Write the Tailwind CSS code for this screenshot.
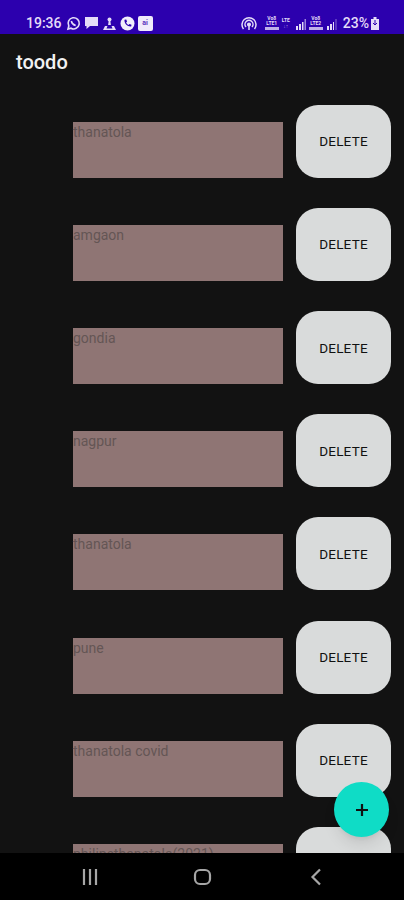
<!DOCTYPE html>
<html lang="en">
<head>
    <meta charset="UTF-8">
    <meta name="viewport" content="width=device-width, initial-scale=1.0">
    <title>toodo</title>
    <script src="https://cdn.jsdelivr.net/npm/@tailwindcss/browser@4"></script>
</head>
<body class="w-[404px] h-[900px] overflow-hidden bg-[#121212] font-['Roboto',sans-serif]">
<div class="relative flex flex-col h-[900px]">
    <!-- Status bar -->
    <div class="h-[34px] shrink-0 bg-[#2c00ae] flex items-center justify-between pl-[26px] pr-[25px] pt-[13px] pb-[1px] text-[#e4dcf8]">
        <div class="flex items-center gap-[3px]">
            <span class="text-[14px] font-medium leading-none mr-[1px]">19:36</span>
            <svg width="15" height="15" viewBox="0 0 15 15" fill="none" stroke="currentColor" stroke-width="1.6"><path d="M2 13l.8-3A5.6 5.6 0 1 1 5 12.2z"/><path d="M5.3 5c.5 2.4 2 4 4.4 4.6" stroke-width="1.5"/></svg>
            <svg width="15" height="14" viewBox="0 0 15 14" fill="currentColor"><path d="M1 1h13v9H6l-3.5 3v-3H1z"/></svg>
            <svg width="15" height="15" viewBox="0 0 15 15" fill="currentColor"><circle cx="7.5" cy="3.5" r="2"/><path d="M6.7 5h1.6l.6 4H6.100z"/><path d="M1 14l2-4h2.500l-1 2.500h6l-1-2.500H12l2 4z"/></svg>
            <svg width="15" height="15" viewBox="0 0 15 15"><circle cx="7.500" cy="7.500" r="7" fill="#f1edfb"/><path d="M4.500 3.800l1.700-.3.900 2-1 1c.6 1.200 1.300 1.900 2.400 2.400l1-1 2 .9-.3 1.700c-3.600.5-7.200-3-6.700-6.700z" fill="#2c00ae"/></svg>
            <span class="w-[15px] h-[15px] rounded-[2px] bg-[#efeafb] flex items-center justify-center text-[7px] font-bold text-[#5a35bd] leading-none">ai</span>
        </div>
        <div class="flex items-center">
            <svg width="16" height="15" viewBox="0 0 16 15" fill="none" stroke="currentColor" stroke-width="1.500" class="mr-[8px]"><path d="M2.500 13A7 7 0 1 1 13.500 13"/><path d="M5 11a4 4 0 1 1 6 0"/><circle cx="8" cy="8.500" r="1.300" fill="currentColor"/><path d="M8 9v5"/></svg>
            <span class="flex flex-col text-[5px] font-bold leading-[5px] w-[14px] mr-[1px] text-center"><span>Vo8</span><span>LTE1</span><span class="h-[3px] bg-[#e4dcf8]/80 mt-[1px]"></span></span>
            <span class="flex flex-col text-[5px] font-bold leading-[6px] w-[12px] mr-[4px] text-center"><span>LTE</span><span class="text-[#a994e4]">↓↑</span></span>
            <svg width="10" height="11" viewBox="0 0 10 11" fill="currentColor" class="mr-[3px] mt-[2px]"><path d="M0 7h2v4H0zM3 5h2v6H3zM6 3h1.500v8H6z"/><path d="M8.500 0H10v11H8.500z" opacity=".6"/></svg>
            <span class="flex flex-col text-[5px] font-bold leading-[5px] w-[14px] mr-[4px] text-center"><span>Vo8</span><span>LTE2</span><span class="h-[3px] bg-[#e4dcf8]/80 mt-[1px]"></span></span>
            <svg width="10" height="11" viewBox="0 0 10 11" fill="currentColor" class="mr-[6px] mt-[2px]"><path d="M0 7h2v4H0zM3 5h2v6H3zM6 3h1v8H6z"/><path d="M8.500 0h1v11h-1z" opacity=".5"/></svg>
            <span class="text-[14px] font-medium leading-none">23%</span>
            <svg width="8" height="13" viewBox="0 0 8 13" fill="currentColor" class="ml-[2px]"><path d="M2.500 0h3v2H8v11H0V2h2.500z"/><path d="M4 3v5M2 6l2 2 2-2" stroke="#2c00ae" fill="none"/></svg>
        </div>
    </div>

    <!-- App bar -->
    <div class="h-[56px] shrink-0 flex items-center pl-4 text-[#f2f2f2] text-[20px] font-medium">
        toodo
    </div>

    <!-- List -->
    <div class="flex-1 overflow-hidden flex flex-col gap-[30.14px] pt-[14.9px] pl-[73px] pr-[13px]">
        <div class="flex items-end gap-[13px] shrink-0">
            <div class="w-[210px] h-[56px] bg-[#8f7574] text-[14px] leading-5 text-[#645555]">thanatola</div>
            <button class="w-[95px] h-[73px] rounded-[22px] bg-[#d9dbdb] text-[#111] text-[13.5px] tracking-[0.2px]">DELETE</button>
        </div>
        <div class="flex items-end gap-[13px] shrink-0">
            <div class="w-[210px] h-[56px] bg-[#8f7574] text-[14px] leading-5 text-[#645555]">amgaon</div>
            <button class="w-[95px] h-[73px] rounded-[22px] bg-[#d9dbdb] text-[#111] text-[13.5px] tracking-[0.2px]">DELETE</button>
        </div>
        <div class="flex items-end gap-[13px] shrink-0">
            <div class="w-[210px] h-[56px] bg-[#8f7574] text-[14px] leading-5 text-[#645555]">gondia</div>
            <button class="w-[95px] h-[73px] rounded-[22px] bg-[#d9dbdb] text-[#111] text-[13.5px] tracking-[0.2px]">DELETE</button>
        </div>
        <div class="flex items-end gap-[13px] shrink-0">
            <div class="w-[210px] h-[56px] bg-[#8f7574] text-[14px] leading-5 text-[#645555]">nagpur</div>
            <button class="w-[95px] h-[73px] rounded-[22px] bg-[#d9dbdb] text-[#111] text-[13.5px] tracking-[0.2px]">DELETE</button>
        </div>
        <div class="flex items-end gap-[13px] shrink-0">
            <div class="w-[210px] h-[56px] bg-[#8f7574] text-[14px] leading-5 text-[#645555]">thanatola</div>
            <button class="w-[95px] h-[73px] rounded-[22px] bg-[#d9dbdb] text-[#111] text-[13.5px] tracking-[0.2px]">DELETE</button>
        </div>
        <div class="flex items-end gap-[13px] shrink-0">
            <div class="w-[210px] h-[56px] bg-[#8f7574] text-[14px] leading-5 text-[#645555]">pune</div>
            <button class="w-[95px] h-[73px] rounded-[22px] bg-[#d9dbdb] text-[#111] text-[13.5px] tracking-[0.2px]">DELETE</button>
        </div>
        <div class="flex items-end gap-[13px] shrink-0">
            <div class="w-[210px] h-[56px] bg-[#8f7574] text-[14px] leading-5 text-[#645555]">thanatola covid</div>
            <button class="w-[95px] h-[73px] rounded-[22px] bg-[#d9dbdb] text-[#111] text-[13.5px] tracking-[0.2px]">DELETE</button>
        </div>
        <div class="flex items-end gap-[13px] shrink-0">
            <div class="w-[210px] h-[56px] bg-[#8f7574] text-[14px] leading-5 text-[#645555]">philipsthanatola(2021)</div>
            <button class="w-[95px] h-[73px] rounded-[22px] bg-[#d9dbdb] text-[#111] text-[13.5px] tracking-[0.2px]">DELETE</button>
        </div>
    </div>

    <!-- Nav bar -->
    <div class="h-[47px] shrink-0 bg-black flex items-center text-[#a6a6a6]">
        <svg width="18" height="18" viewBox="0 0 18 18" fill="none" stroke="currentColor" stroke-width="2.200" class="ml-[81px]"><path d="M3 1v16M9 1v16M15 1v16"/></svg>
        <svg width="20" height="18" viewBox="0 0 20 18" fill="none" stroke="currentColor" stroke-width="2.200" class="ml-[94px]"><rect x="2" y="2" width="15" height="14" rx="5"/></svg>
        <svg width="14" height="18" viewBox="0 0 14 18" fill="none" stroke="currentColor" stroke-width="2.200" class="ml-[96px]"><path d="M11 1.500L3.500 9l7.500 7.500"/></svg>
    </div>

    <!-- FAB -->
    <button class="absolute left-[334px] top-[782px] w-[55px] h-[55px] rounded-full bg-[#0fdcc6] shadow-lg flex items-center justify-center">
        <svg width="14" height="14" viewBox="0 0 14 14" fill="none" stroke="#111" stroke-width="2.200"><path d="M7 1v12M1 7h12"/></svg>
    </button>
</div>
</body>
</html>
